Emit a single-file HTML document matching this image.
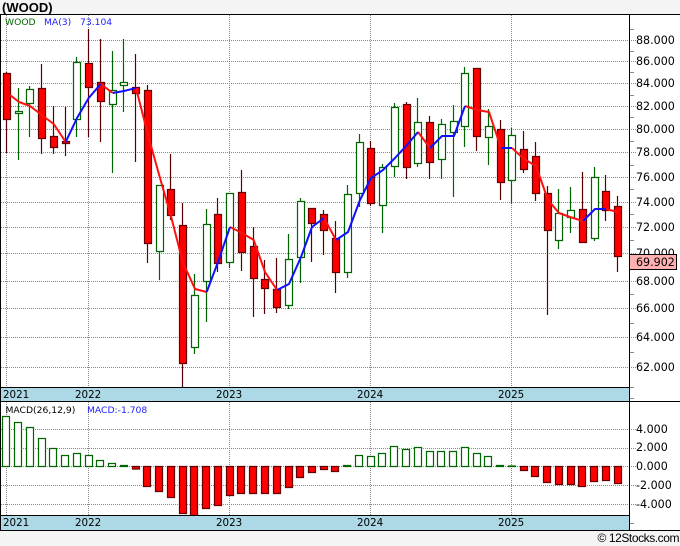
<!DOCTYPE html>
<html><head><meta charset="utf-8"><style>
html,body{margin:0;padding:0;background:#f4f4f4;width:680px;height:546px;overflow:hidden}
svg{display:block}
text{font-family:"DejaVu Sans",sans-serif;font-size:11.1px;fill:#000}
.l{font-size:9.2px}.y{font-size:10.3px}
</style></head><body>
<svg width="680" height="546" viewBox="0 0 680 546" xmlns="http://www.w3.org/2000/svg">
<rect width="680" height="546" fill="#f4f4f4"/>
<rect x="0" y="14" width="680" height="517" fill="#fff"/>
<text x="2" y="12" style="font:bold 13px 'Liberation Sans',sans-serif">(WOOD)</text>
<g stroke="#888" stroke-dasharray="1 1" fill="none" shape-rendering="crispEdges">
<path d="M1 40.5H636M1 61.5H636M1 83.5H636M1 106.5H636M1 129.5H636M1 152.5H636M1 177.5H636M1 202.5H636M1 227.5H636M1 253.5H636M1 281.5H636M1 308.5H636M1 337.5H636M1 367.5H636M1 429.5H636M1 448.5H636M1 466.5H636M1 485.5H636M1 504.5H636"/>
<path d="M6.5 15V387M88.5 15V387M229.5 15V387M370.5 15V387M511.5 15V387M6.5 402V515M88.5 402V515M229.5 402V515M370.5 402V515M511.5 402V515"/>
</g>
<path d="M630 29.5h4M630 51.5h4M630 72.5h4M630 95.5h4M630 117.5h4M630 141.5h4M630 165.5h4M630 189.5h4M630 214.5h4M630 240.5h4M630 294.5h4M630 323.5h4M630 352.5h4M630 387.5h4M630 398.5h4M630 523.5h4" stroke="#888" fill="none"/>
<!-- wicks -->
<path fill="none" stroke="#5a0000" stroke-width="1.2" d="M6.5 72V153M41.5 64V154M53.5 106V154M65.5 107V156M88.5 29V137M100.5 39V142M135.5 54V162M147.5 85V263M170.5 154V220M182.5 203V387M217.5 198V272M241.5 170V271M253.5 227V317M264.5 260V314M276.5 258V313M311.5 208V262M323.5 210V255M335.5 221V293M370.5 141V206M406.5 102V179M429.5 116V179M476.5 68V151M500.5 120V200M523.5 131V173M535.5 142V201M547.5 186V315M582.5 172V243M605.5 175V221M617.5 196V272"/>
<path fill="none" stroke="#006400" stroke-width="1.2" d="M18.5 88V160M29.5 86V137M76.5 57V137M112.5 51V173M123.5 39V112M159.5 185V280M194.5 274V354M206.5 209V322M229.5 193V268M288.5 234V309M300.5 198V283M347.5 185V278M359.5 134V207M382.5 164V233M394.5 103V177M417.5 98V167M441.5 119V179M453.5 105V197M464.5 67V147M488.5 109V165M511.5 128V204M558.5 189V249M570.5 187V233M594.5 167V241"/>
<!-- bodies -->
<path fill="#fff" stroke="#006400" stroke-width="1.2" d="M15.5 111.5h7V113.5h-7zM26.5 89.5h7V103.5h-7zM73.5 62.5h7V119.5h-7zM109.5 90.5h7V104.5h-7zM120.5 82.5h7V85.5h-7zM156.5 185.5h7V251.5h-7zM191.5 295.5h7V347.5h-7zM203.5 224.5h7V281.5h-7zM226.5 193.5h7V262.5h-7zM285.5 259.5h7V305.5h-7zM297.5 201.5h7V257.5h-7zM344.5 194.5h7V272.5h-7zM356.5 142.5h7V193.5h-7zM379.5 167.5h7V205.5h-7zM391.5 107.5h7V166.5h-7zM414.5 122.5h7V163.5h-7zM438.5 124.5h7V159.5h-7zM450.5 121.5h7V132.5h-7zM461.5 73.5h7V126.5h-7zM485.5 126.5h7V137.5h-7zM508.5 135.5h7V180.5h-7zM555.5 213.5h7V240.5h-7zM567.5 210.5h7V217.5h-7zM591.5 177.5h7V238.5h-7z"/>
<path fill="#f00" stroke="#600" stroke-width="1.2" d="M3.5 73.5h7V119.5h-7zM38.5 88.5h7V138.5h-7zM50.5 136.5h7V147.5h-7zM62.5 141.5h7V143.5h-7zM85.5 63.5h7V87.5h-7zM97.5 82.5h7V101.5h-7zM132.5 87.5h7V93.5h-7zM144.5 90.5h7V243.5h-7zM167.5 189.5h7V215.5h-7zM179.5 225.5h7V363.5h-7zM214.5 214.5h7V263.5h-7zM238.5 192.5h7V252.5h-7zM250.5 246.5h7V278.5h-7zM261.5 279.5h7V288.5h-7zM273.5 289.5h7V307.5h-7zM308.5 208.5h7V223.5h-7zM320.5 214.5h7V230.5h-7zM332.5 238.5h7V272.5h-7zM367.5 148.5h7V203.5h-7zM403.5 104.5h7V167.5h-7zM426.5 122.5h7V162.5h-7zM473.5 68.5h7V136.5h-7zM497.5 129.5h7V182.5h-7zM520.5 149.5h7V169.5h-7zM532.5 156.5h7V193.5h-7zM544.5 193.5h7V230.5h-7zM579.5 209.5h7V242.5h-7zM602.5 191.5h7V210.5h-7zM614.5 206.5h7V256.5h-7z"/>
<!-- MA -->
<path fill="none" stroke="#ff1010" stroke-width="2" stroke-linejoin="round" d="M10 95L19 102L30 106L41.7 115L53.7 124L65.7 142M100.7 84L112.7 93M136 88L148 135L160 178L170.7 215L182.7 262L195 289L206.7 292M230 227L242 233L253.7 240L265 272L277 290M324 218L336 240M418 132L430 148M465 106L477 110L489 112L501 148M512 148L524 159L536 166L548 200L559 213L570 217L582.7 221M606 209L617.7 212"/>
<path fill="none" stroke="#1010ff" stroke-width="2" stroke-linejoin="round" d="M65.7 142L77 118L88.7 98L100.7 84M112.7 93L124 91L136 88M206.7 292L218 262L230 227M277 290L289 284L301 257L312 227L324 218M336 240L348 232L360 200L371 178L383 170L395 158L407 145L418 132M430 148L442 136L454 136L465 106M501 148L512 148M583 221L595 209L606 209"/>
<!-- MACD bars -->
<path fill="#fff" stroke="#006400" stroke-width="1.2" d="M2.5 416.5h7V466.5h-7zM14.5 422.5h7V466.5h-7zM26.5 427.5h7V466.5h-7zM38.5 438.5h7V466.5h-7zM49.5 448.5h7V466.5h-7zM61.5 455.5h7V466.5h-7zM73.5 453.5h7V466.5h-7zM85.5 455.5h7V466.5h-7zM96.5 460.5h7V466.5h-7zM108.5 463.5h7V466.5h-7zM120.5 465.5h7V466.5h-7zM343.5 465.5h7V466.5h-7zM355.5 455.5h7V466.5h-7zM367.5 456.5h7V466.5h-7zM378.5 453.5h7V466.5h-7zM390.5 446.5h7V466.5h-7zM402.5 449.5h7V466.5h-7zM414.5 447.5h7V466.5h-7zM426.5 451.5h7V466.5h-7zM437.5 451.5h7V466.5h-7zM449.5 451.5h7V466.5h-7zM461.5 447.5h7V466.5h-7zM473.5 453.5h7V466.5h-7zM484.5 456.5h7V466.5h-7zM496.5 465.5h7V466.5h-7zM508.5 466h7V466.5h-7z"/>
<path fill="#f00" stroke="#600" stroke-width="1.2" d="M132.5 466.5h7V469h-7zM143.5 466.5h7V486.5h-7zM155.5 466.5h7V491.5h-7zM167.5 466.5h7V497.5h-7zM179.5 466.5h7V513.5h-7zM190.5 466.5h7V515.5h-7zM202.5 466.5h7V508.5h-7zM214.5 466.5h7V505.5h-7zM226.5 466.5h7V495.5h-7zM237.5 466.5h7V493.5h-7zM249.5 466.5h7V493.5h-7zM261.5 466.5h7V493.5h-7zM273.5 466.5h7V493.5h-7zM285.5 466.5h7V487.5h-7zM296.5 466.5h7V477.5h-7zM308.5 466.5h7V472.5h-7zM320.5 466.5h7V469.5h-7zM331.5 466.5h7V471.5h-7zM520.5 466.5h7V470.5h-7zM531.5 466.5h7V476.5h-7zM543.5 466.5h7V482.5h-7zM555.5 466.5h7V484.5h-7zM567.5 466.5h7V484.5h-7zM578.5 466.5h7V486.5h-7zM590.5 466.5h7V481.5h-7zM602.5 466.5h7V480.5h-7zM614.5 466.5h7V483.5h-7z"/>
<!-- strips -->
<rect x="1" y="388" width="628" height="13" fill="#add8e6"/>
<rect x="1" y="516" width="628" height="14" fill="#add8e6"/>
<g stroke="#000" fill="none" shape-rendering="crispEdges">
<path d="M0 14.5H680" stroke-width="1"/>
<path d="M0 387.5H630M0 401.5H680M0 515.5H630M0 530.5H680"/>
<path d="M0.5 14V531M629.5 14V531"/>
</g>
<!-- price labels -->
<text x="636" y="44">88.000</text><text x="636" y="65">86.000</text><text x="636" y="87">84.000</text><text x="636" y="110">82.000</text><text x="636" y="133">80.000</text><text x="636" y="156">78.000</text><text x="636" y="181">76.000</text><text x="636" y="206">74.000</text><text x="636" y="231">72.000</text><text x="636" y="257">70.000</text><text x="636" y="285">68.000</text><text x="636" y="312">66.000</text><text x="636" y="341">64.000</text><text x="636" y="371">62.000</text>
<rect x="629.5" y="254.5" width="47" height="15" fill="#ffb0b0" stroke="#000" shape-rendering="crispEdges"/>
<text x="636" y="266">69.902</text>
<text x="636" y="433">4.000</text><text x="636" y="451">2.000</text><text x="636" y="470">0.000</text><text x="636" y="489">-2.000</text><text x="636" y="508">-4.000</text>
<!-- years -->
<text class="y" x="3" y="398">2021</text><text class="y" x="75" y="398">2022</text><text class="y" x="216" y="398">2023</text><text class="y" x="357" y="398">2024</text><text class="y" x="498" y="398">2025</text>
<text class="y" x="3" y="526">2021</text><text class="y" x="75" y="526">2022</text><text class="y" x="216" y="526">2023</text><text class="y" x="357" y="526">2024</text><text class="y" x="498" y="526">2025</text>
<!-- legends -->
<text class="l" x="5" y="25" style="fill:#006400">WOOD</text>
<text class="l" x="44" y="25" style="fill:#2020ff">MA(3)</text>
<text class="l" x="80" y="25" style="fill:#2020ff">73.104</text>
<text class="l" x="5.5" y="413">MACD(26,12,9)</text>
<text class="l" x="87" y="413" style="fill:#2020ff">MACD:-1.708</text>
<text x="597.5" y="542" style="font:12px 'Liberation Sans',sans-serif" textLength="82">© 12Stocks.com</text>
</svg>
</body></html>
